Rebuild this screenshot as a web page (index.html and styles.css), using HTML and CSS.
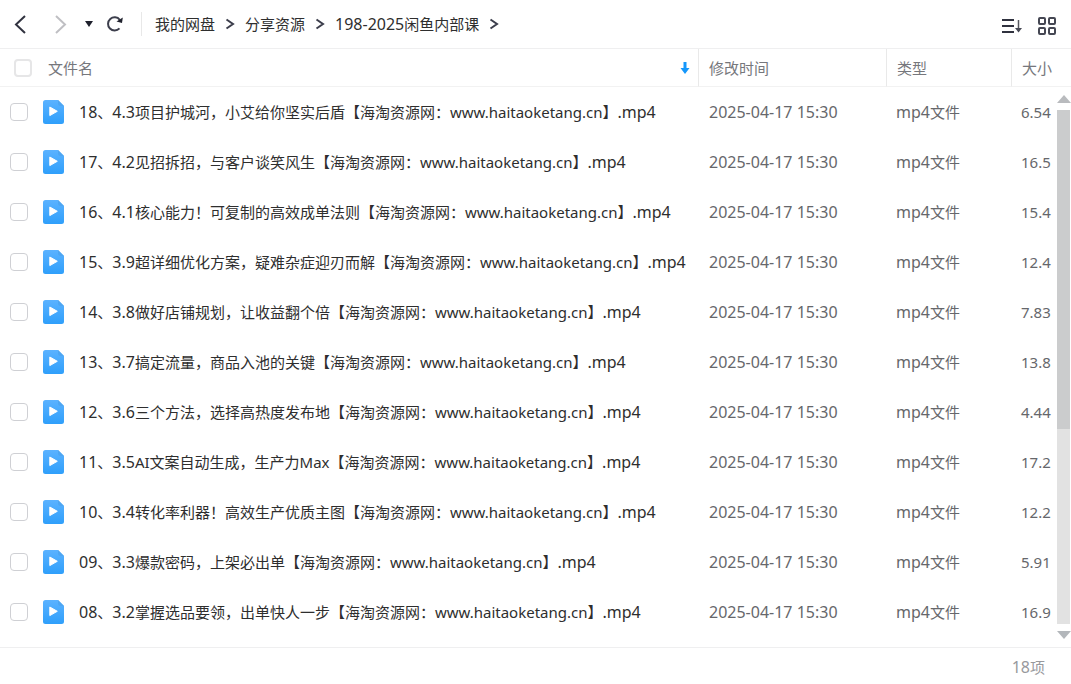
FILE: index.html
```html
<!DOCTYPE html>
<html lang="zh-CN">
<head>
    <meta charset="UTF-8">
    <meta name="viewport" content="width=device-width, initial-scale=1.0">
    <title>198-2025闲鱼内部课</title>
    <link rel="stylesheet" href="styles.css">
</head>
<body>
    <svg class="defs" aria-hidden="true">
        <linearGradient id="blue" x1="0" y1="0" x2="0" y2="1">
            <stop offset="0" stop-color="#5bb2ff"/>
            <stop offset="1" stop-color="#2f9ffb"/>
        </linearGradient>
        <symbol id="video" viewBox="0 0 22 24">
            <path d="M2.500 0H15L21 6V21.500A2.500 2.500 0 0 1 18.500 24H2.500A2.500 2.500 0 0 1 0 21.500V2.500A2.500 2.500 0 0 1 2.500 0Z" fill="url(#blue)"/>
            <path d="M15 0L21 6H17.500A2.500 2.500 0 0 1 15 3.500Z" fill="#4ea6f2"/>
            <path d="M6.800 7V15.600L14.300 11.300Z" fill="#fff" stroke="#fff" stroke-linejoin="round"/>
        </symbol>
        <symbol id="arrow" viewBox="0 0 10 12">
            <path d="M1.5 1.5L8 6L1.5 10.5" fill="none" stroke="#3c3e4c" stroke-width="2"/>
        </symbol>
    </svg>

    <!-- 工具栏 -->
    <header class="toolbar">
        <div class="nav">
            <button aria-label="后退"><svg width="14" height="20" viewBox="0 0 14 20"><path d="M12 2L3 10.5L12 19" fill="none" stroke="#30323f" stroke-width="2"/></svg></button>
            <button aria-label="前进"><svg width="14" height="20" viewBox="0 0 14 20"><path d="M2 2L11 10.5L2 19" fill="none" stroke="#bfbfc3" stroke-width="2"/></svg></button>
            <button class="history" aria-label="历史"><svg width="8" height="8" viewBox="0 0 8 8"><path d="M0 1H8L4 7Z" fill="#1f212d"/></svg></button>
            <button aria-label="刷新"><svg width="18" height="18" viewBox="0 0 18 18"><path d="M13.5 13.4A6.6 6.6 0 1 1 13.8 4.8" fill="none" stroke="#3c3e4c" stroke-width="2"/><path d="M10.5 6.4L16.8 2.6L16 8Z" fill="#20222e"/></svg></button>
        </div>
        <nav class="path">
            <a href="#">我的网盘</a>
            <svg><use href="#arrow"/></svg>
            <a href="#">分享资源</a>
            <svg><use href="#arrow"/></svg>
            <a href="#"><span class="en">198-2025</span>闲鱼内部课</a>
            <svg><use href="#arrow"/></svg>
        </nav>
        <div class="view">
            <button aria-label="排序"><svg width="20" height="16" viewBox="0 0 20 16"><path d="M0 2H12M0 8H12M0 14H12" stroke="#30323f" stroke-width="2"/><path d="M16.5 2V12" stroke="#55575f" stroke-width="1.5"/><path d="M13 10H20L16.5 14.5Z" fill="#474955"/></svg></button>
            <button aria-label="网格视图"><svg width="18" height="18" viewBox="0 0 18 18" fill="none" stroke="#454753" stroke-width="2"><rect x="1" y="1" width="6" height="6" rx="1"/><rect x="11" y="1" width="6" height="6" rx="1"/><rect x="1" y="11" width="6" height="6" rx="1"/><rect x="11" y="11" width="6" height="6" rx="1"/></svg></button>
        </div>
    </header>

    <!-- 文件列表 -->
    <main class="list">
        <table>
            <thead>
                <tr>
                    <th>
                        <div class="head-name">
                            <input type="checkbox" id="all" aria-label="全选">
                            <label for="all">文件名</label>
                            <svg width="10" height="14" viewBox="0 0 10 14"><path d="M3.5 1H6.5V7H9.5L5 13L0.5 7H3.5Z" fill="#1597fb"/></svg>
                        </div>
                    </th>
                    <th class="date">修改时间</th>
                    <th class="type">类型</th>
                    <th class="size">大小</th>
                </tr>
            </thead>
            <tbody>
                <tr>
                    <td><div class="file"><input type="checkbox" id="f18"><svg><use href="#video"/></svg><label for="f18"><span class="en">18</span>、<span class="en">4.3</span>项目护城河，小艾给你坚实后盾【海淘资源网：www.haitaoketang.cn】<span class="en">.mp4</span></label></div></td>
                    <td class="en">2025-04-17 15:30</td>
                    <td><span class="en">mp4</span>文件</td>
                    <td>6.54</td>
                </tr>
                <tr>
                    <td><div class="file"><input type="checkbox" id="f17"><svg><use href="#video"/></svg><label for="f17"><span class="en">17</span>、<span class="en">4.2</span>见招拆招，与客户谈笑风生【海淘资源网：www.haitaoketang.cn】<span class="en">.mp4</span></label></div></td>
                    <td class="en">2025-04-17 15:30</td>
                    <td><span class="en">mp4</span>文件</td>
                    <td>16.5</td>
                </tr>
                <tr>
                    <td><div class="file"><input type="checkbox" id="f16"><svg><use href="#video"/></svg><label for="f16"><span class="en">16</span>、<span class="en">4.1</span>核心能力！可复制的高效成单法则【海淘资源网：www.haitaoketang.cn】<span class="en">.mp4</span></label></div></td>
                    <td class="en">2025-04-17 15:30</td>
                    <td><span class="en">mp4</span>文件</td>
                    <td>15.4</td>
                </tr>
                <tr>
                    <td><div class="file"><input type="checkbox" id="f15"><svg><use href="#video"/></svg><label for="f15"><span class="en">15</span>、<span class="en">3.9</span>超详细优化方案，疑难杂症迎刃而解【海淘资源网：www.haitaoketang.cn】<span class="en">.mp4</span></label></div></td>
                    <td class="en">2025-04-17 15:30</td>
                    <td><span class="en">mp4</span>文件</td>
                    <td>12.4</td>
                </tr>
                <tr>
                    <td><div class="file"><input type="checkbox" id="f14"><svg><use href="#video"/></svg><label for="f14"><span class="en">14</span>、<span class="en">3.8</span>做好店铺规划，让收益翻个倍【海淘资源网：www.haitaoketang.cn】<span class="en">.mp4</span></label></div></td>
                    <td class="en">2025-04-17 15:30</td>
                    <td><span class="en">mp4</span>文件</td>
                    <td>7.83</td>
                </tr>
                <tr>
                    <td><div class="file"><input type="checkbox" id="f13"><svg><use href="#video"/></svg><label for="f13"><span class="en">13</span>、<span class="en">3.7</span>搞定流量，商品入池的关键【海淘资源网：www.haitaoketang.cn】<span class="en">.mp4</span></label></div></td>
                    <td class="en">2025-04-17 15:30</td>
                    <td><span class="en">mp4</span>文件</td>
                    <td>13.8</td>
                </tr>
                <tr>
                    <td><div class="file"><input type="checkbox" id="f12"><svg><use href="#video"/></svg><label for="f12"><span class="en">12</span>、<span class="en">3.6</span>三个方法，选择高热度发布地【海淘资源网：www.haitaoketang.cn】<span class="en">.mp4</span></label></div></td>
                    <td class="en">2025-04-17 15:30</td>
                    <td><span class="en">mp4</span>文件</td>
                    <td>4.44</td>
                </tr>
                <tr>
                    <td><div class="file"><input type="checkbox" id="f11"><svg><use href="#video"/></svg><label for="f11"><span class="en">11</span>、<span class="en">3.5</span>AI文案自动生成，生产力Max【海淘资源网：www.haitaoketang.cn】<span class="en">.mp4</span></label></div></td>
                    <td class="en">2025-04-17 15:30</td>
                    <td><span class="en">mp4</span>文件</td>
                    <td>17.2</td>
                </tr>
                <tr>
                    <td><div class="file"><input type="checkbox" id="f10"><svg><use href="#video"/></svg><label for="f10"><span class="en">10</span>、<span class="en">3.4</span>转化率利器！高效生产优质主图【海淘资源网：www.haitaoketang.cn】<span class="en">.mp4</span></label></div></td>
                    <td class="en">2025-04-17 15:30</td>
                    <td><span class="en">mp4</span>文件</td>
                    <td>12.2</td>
                </tr>
                <tr>
                    <td><div class="file"><input type="checkbox" id="f09"><svg><use href="#video"/></svg><label for="f09"><span class="en">09</span>、<span class="en">3.3</span>爆款密码，上架必出单【海淘资源网：www.haitaoketang.cn】<span class="en">.mp4</span></label></div></td>
                    <td class="en">2025-04-17 15:30</td>
                    <td><span class="en">mp4</span>文件</td>
                    <td>5.91</td>
                </tr>
                <tr>
                    <td><div class="file"><input type="checkbox" id="f08"><svg><use href="#video"/></svg><label for="f08"><span class="en">08</span>、<span class="en">3.2</span>掌握选品要领，出单快人一步【海淘资源网：www.haitaoketang.cn】<span class="en">.mp4</span></label></div></td>
                    <td class="en">2025-04-17 15:30</td>
                    <td><span class="en">mp4</span>文件</td>
                    <td>16.9</td>
                </tr>
            </tbody>
        </table>
        <div class="scrollbar">
            <svg width="14" height="8" viewBox="0 0 14 8"><path d="M0 8L7 0L14 8Z" fill="#b9bbbe"/></svg>
            <div class="track"><div class="thumb"></div></div>
            <svg width="14" height="8" viewBox="0 0 14 8"><path d="M0 0H14L7 8Z" fill="#b3b7bb"/></svg>
        </div>
    </main>

    <footer class="status"><span class="en">18</span>项</footer>
</body>
</html>
```

FILE: styles.css
```css
* {
    box-sizing: border-box;
}
body {
    margin: 0;
    min-height: 100vh;
    display: flex;
    flex-direction: column;
    background-color: #fff;
    color: #2e2e2e;
    font-family: "Noto Sans", "Noto Sans CJK SC", sans-serif;
    font-size: 15px;
    line-height: 24px;
}
.en {
    font-size: 16px;
}
.defs {
    position: absolute;
    width: 0;
    height: 0;
}
button {
    display: flex;
    padding: 0;
    border: none;
    background: none;
    cursor: pointer;
}
a {
    color: inherit;
    text-decoration: none;
}

/* 工具栏 */
.toolbar {
    display: flex;
    align-items: center;
    height: 49px;
    padding: 0 15px 0 13px;
    border-bottom: 1px solid #efeff0;
}
.nav {
    display: flex;
    align-items: center;
    gap: 17px;
    height: 24px;
    padding-right: 17px;
    border-right: 1px solid #e8e8e8;
}
.nav button:first-child {
    margin-right: 10px;
}
.nav .history {
    margin-right: -4px;
}
.path {
    display: flex;
    align-items: center;
    gap: 10px;
    padding-left: 13px;
    white-space: nowrap;
}
.path svg {
    width: 10px;
    height: 12px;
}
.view {
    display: flex;
    align-items: center;
    gap: 16px;
    margin-left: auto;
    padding-top: 4px;
}

/* 文件列表 */
.list {
    position: relative;
    flex: 1;
    overflow: hidden;
}
table {
    width: 100%;
    table-layout: fixed;
    border-collapse: separate;
    border-spacing: 0;
    white-space: nowrap;
}
th {
    height: 38px;
    padding: 0 0 0 10px;
    border-bottom: 1px solid #f2f2f2;
    border-left: 1px solid #e9e9e9;
    color: #76777c;
    font-weight: normal;
    text-align: left;
}
th:first-child {
    padding: 0 8px 0 14px;
    border-left: none;
}
.date {
    width: 188px;
}
.type {
    width: 125px;
}
.size {
    width: 60px;
}
td {
    height: 50px;
    padding: 0 0 0 10px;
    color: #66676b;
}
td:first-child {
    color: #2e2e2e;
}
td.en {
    padding-left: 11px;
}
.head-name,
.file {
    display: flex;
    align-items: center;
}
.head-name svg {
    margin-left: auto;
}
.head-name label {
    margin-left: 16px;
}
.file svg {
    width: 22px;
    height: 24px;
    margin: 0 14px 0 15px;
}
input[type="checkbox"] {
    appearance: none;
    flex: none;
    width: 18px;
    height: 18px;
    margin: 0;
    border: 1px solid #cfd0d4;
    border-radius: 4px;
    background-color: #fff;
}
.head-name input[type="checkbox"] {
    border: 2px solid #e6e6e7;
}

/* 滚动条 */
.scrollbar {
    position: absolute;
    top: 46px;
    right: 0;
    bottom: 8px;
    width: 14px;
    display: flex;
    flex-direction: column;
    gap: 7px;
}
.track {
    flex: 1;
    width: 13px;
    background-color: #e2e2e2;
}
.thumb {
    height: 62%;
    background-color: #cbcccd;
}

.status {
    height: 37px;
    padding: 7px 26px 0 0;
    border-top: 1px solid #efeff0;
    color: #98999d;
    text-align: right;
}
```
